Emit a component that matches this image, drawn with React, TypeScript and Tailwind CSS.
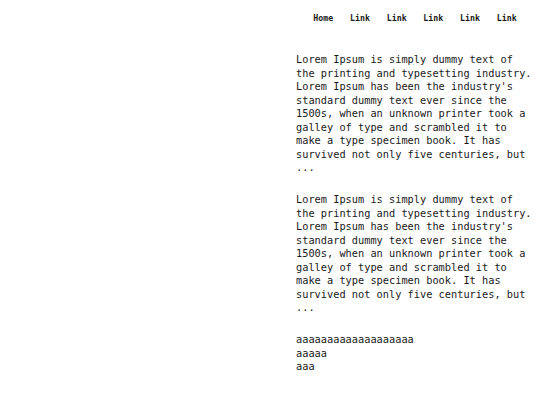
import React from "react";

const lorem =
  "Lorem Ipsum is simply dummy text of the printing and typesetting industry. Lorem Ipsum has been the industry's standard dummy text ever since the 1500s, when an unknown printer took a galley of type and scrambled it to make a type specimen book. It has survived not only five centuries, but ...";

export default function App() {
  const links = ["Home", "Link", "Link", "Link", "Link", "Link"];

  return (
    <div className="flex w-[540px] h-[405px] bg-white text-[#1a1a1a] font-['DejaVu_Sans_Mono',monospace]">
      <div className="w-[296px] shrink-0" />
      <div className="flex flex-col w-[238px]">
        {/* Nav */}
        <nav className="flex justify-center gap-[16.7px] pt-[13px] text-[8.3px] font-bold leading-[10px]">
          {links.map((l, i) => (
            <a key={i} href="#" className="text-[#1a1a1a]">
              {l}
            </a>
          ))}
        </nav>

        {/* Content */}
        <div className="flex flex-col gap-[18.5px] mt-[30px] text-[10.3px] leading-[13.5px]">
          <p>{lorem}</p>
          <p>{lorem}</p>
          <p>
            aaaaaaaaaaaaaaaaaaa
            <br />
            aaaaa
            <br />
            aaa
          </p>
        </div>
      </div>
    </div>
  );
}
